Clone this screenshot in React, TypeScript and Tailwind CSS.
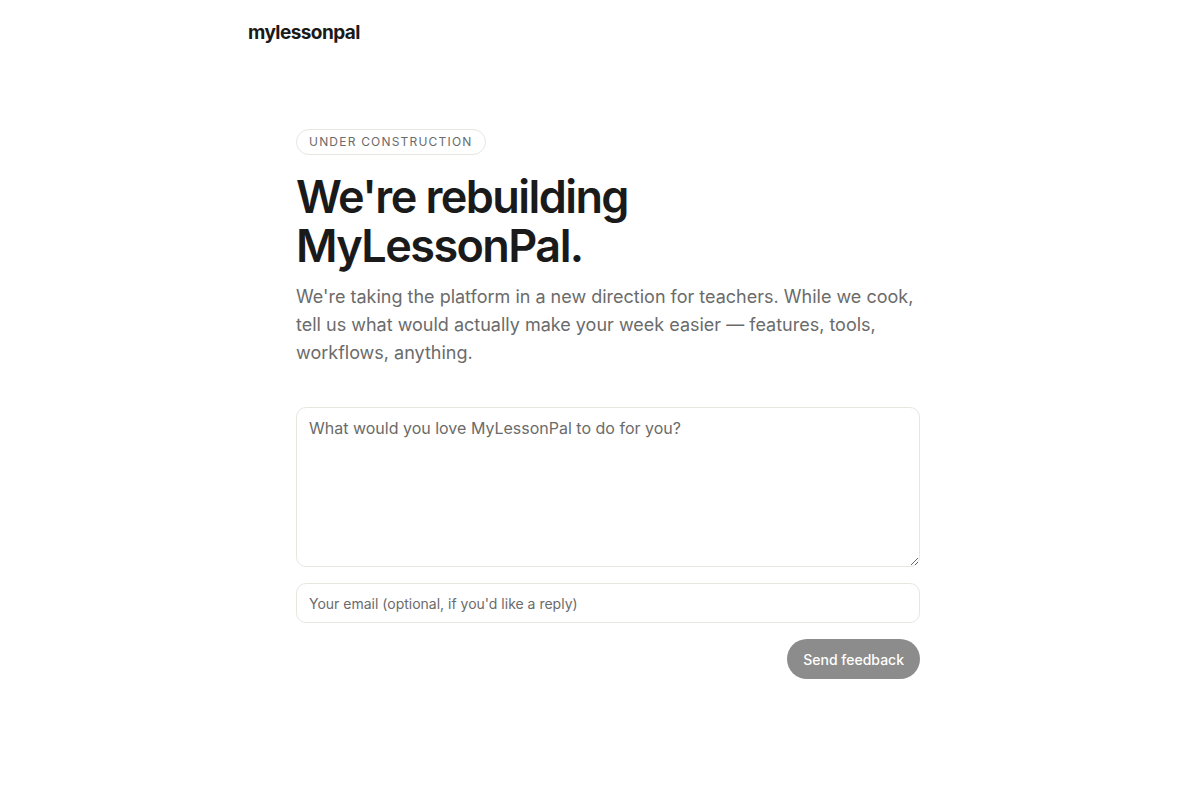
export default function App() {
  return (
    <div className="min-h-screen bg-white font-['Inter',sans-serif] text-[#1a1a1a]">
      <div className="mx-auto w-[704px]">
        <header className="pt-[20px]">
          <span className="text-[19px] leading-[26px] font-bold tracking-[-0.03em] text-[#1a1a1a]">
            mylessonpal
          </span>
        </header>
        <main className="pt-[82px] pl-12">
          <div className="w-[624px]">
            <span className="inline-block rounded-full border border-[#e8e6e0] px-3 py-[4px] text-[12px] leading-[16px] tracking-[0.1em] text-[#6b6b6b] uppercase">
              Under construction
            </span>
            <h1 className="mt-[17px] text-[45px] leading-[49px] font-semibold tracking-[-0.035em] text-[#1a1a1a]">
              We're rebuilding
              <br />
              MyLessonPal.
            </h1>
            <p className="mt-[13px] text-[18px] leading-[28px] text-[#6b6b6b]">
              We're taking the platform in a new direction for teachers. While we cook, tell us
              what would actually make your week easier — features, tools, workflows, anything.
            </p>
            <form className="mt-[40px] flex flex-col" onSubmit={(e) => e.preventDefault()}>
              <textarea
                placeholder="What would you love MyLessonPal to do for you?"
                className="h-[160px] w-full rounded-[10px] border border-[#e8e6e0] px-3 py-[8px] text-[16px] leading-[24px] text-[#1a1a1a] outline-none placeholder:text-[#6b6b6b]"
              />
              <input
                type="email"
                placeholder="Your email (optional, if you'd like a reply)"
                className="mt-4 h-[40px] w-full rounded-[10px] border border-[#e8e6e0] px-3 text-[14px] text-[#1a1a1a] outline-none placeholder:text-[#6b6b6b]"
              />
              <div className="mt-4 flex justify-end">
                <button
                  type="submit"
                  className="h-[40px] rounded-full bg-[#8c8c8c] px-4 text-[14px] font-medium text-white"
                >
                  Send feedback
                </button>
              </div>
            </form>
          </div>
        </main>
      </div>
    </div>
  )
}
